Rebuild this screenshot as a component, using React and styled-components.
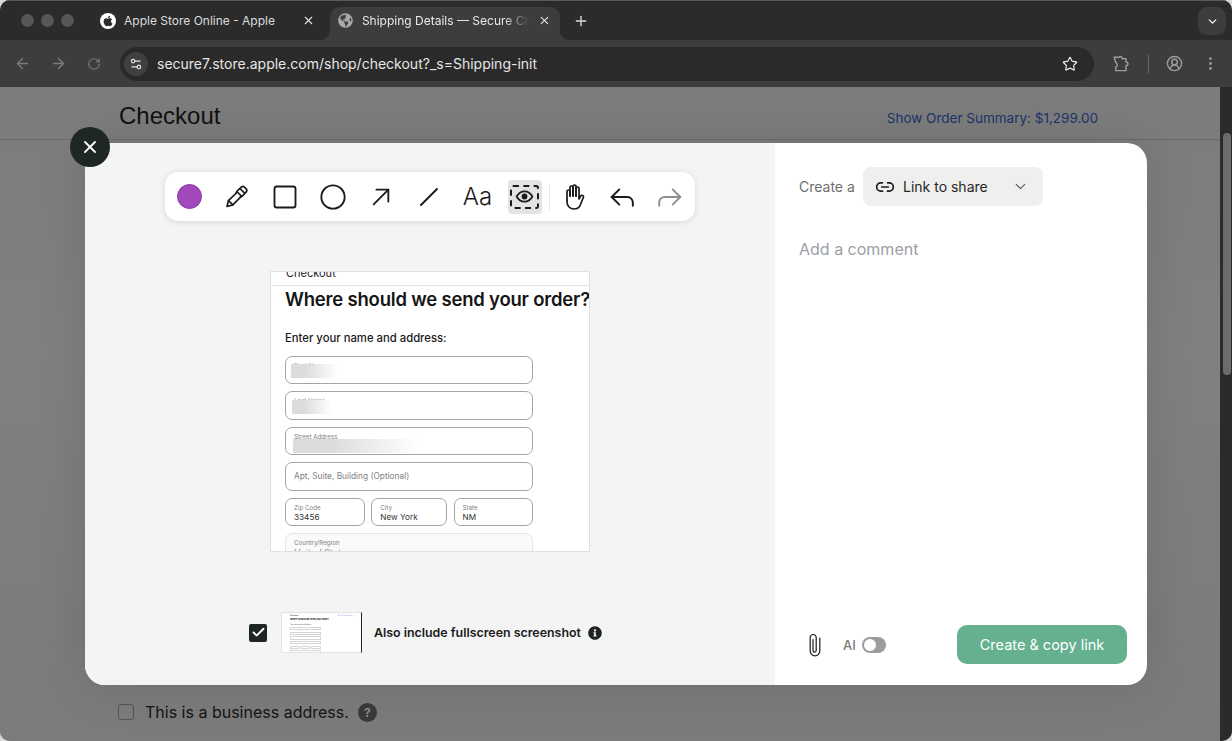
import React from 'react'
import styled, { createGlobalStyle } from 'styled-components'
import {
  X, Plus, ChevronDown, ArrowLeft, ArrowRight, RotateCw, Settings2, Star,
  CircleUserRound, EllipsisVertical, Square, Circle, Link2, Check,
} from 'lucide-react'
import { FaApple, FaGlobeAmericas, FaInfoCircle } from 'react-icons/fa'

const GlobalStyle = createGlobalStyle`
  html, body {
    margin: 0;
    padding: 0;
    background: #d8d8d8;
    overflow: hidden;
  }
  * { box-sizing: border-box; }
`

function Glyph({ size = 24, height, box = '0 0 24 24', width = 1.9, children }) {
  return (
    <svg width={size} height={height || size} viewBox={box} fill="none" stroke="currentColor" strokeWidth={width} strokeLinecap="round" strokeLinejoin="round">
      {children}
    </svg>
  )
}

const PenIcon = () => (
  <Glyph size={25} width={1.6}>
    <path d="M2.800 21.500l1.500-5.500 8.500-8.300 4 4-8.300 8.400z" />
    <path d="M4.300 16l4.200 4.100" />
    <path d="M11.500 9l1.200-2.500 2.600-2.200 4.700 4.700-2.200 2.600-2.300 1.100" />
    <path d="M16 3.600l1.200-1c.7-.5 1.500-.4 2.100.2l2.200 2.200c.6.6.7 1.400.2 2.100l-1.200 1.400" />
  </Glyph>
)

const ArrowIcon = () => (
  <Glyph size={22} width={2}>
    <path d="M4 20L20 4" />
    <path d="M7 4h13v13" />
  </Glyph>
)

const LineIcon = () => (
  <Glyph>
    <path d="M4 20L20 4" />
  </Glyph>
)

const EyeIcon = () => (
  <Glyph size={19} width={2.2}>
    <path d="M2 12s3.600-6.500 10-6.500S22 12 22 12s-3.600 6.500-10 6.500S2 12 2 12z" />
    <circle cx="12" cy="12" r="2.600" fill="currentColor" />
  </Glyph>
)

const HandIcon = () => (
  <Glyph size={24} height={28} box="0 0 24 28" width={1.7}>
    <path d="M5 17V8.500a1.500 1.500 0 0 1 3 0V13" />
    <path d="M8 13V4.500a1.500 1.500 0 0 1 3 0V13" />
    <path d="M11 13V3.500a1.500 1.500 0 0 1 3 0V13" />
    <path d="M14 13V5.500a1.500 1.500 0 0 1 3 0V16l1.700-3a1.500 1.500 0 0 1 2.600 1.500L18.300 22c-1 2.500-3.300 4-6.300 4-4 0-7-3-7-7v-2" />
  </Glyph>
)

const UndoIcon = () => (
  <Glyph size={26} width={1.8}>
    <path d="M9.500 5L2.500 12l7 7" />
    <path d="M2.500 12H17a5 5 0 0 1 5 5v3" />
  </Glyph>
)

const RedoIcon = () => (
  <Glyph size={26} width={1.8}>
    <path d="M14.500 5l7 7-7 7" />
    <path d="M21.500 12H7a5 5 0 0 0-5 5v3" />
  </Glyph>
)

const ClipIcon = () => (
  <Glyph size={12} height={24} box="0 0 12 24" width={1.2}>
    <path d="M10.800 5v13a4.800 4.800 0 0 1-9.600 0V4.500a3 3 0 0 1 6 0v13a1.600 1.600 0 0 1-3.200 0v-11" />
  </Glyph>
)

const ExtensionIcon = () => (
  <Glyph size={19} width={1.8}>
    <path d="M4 4h6.500a2 2 0 0 1 3.500 1.500V6h5v4.500h.5a2 2 0 0 1 0 4H19V21H6v-4.500a3 3 0 0 0 0-5.500z" />
  </Glyph>
)

function Field({ label, value, muted }) {
  return (
    <FieldBox $muted={muted}>
      <FieldLabel>{label}</FieldLabel>
      {value && <FieldValue $muted={muted}>{value}</FieldValue>}
    </FieldBox>
  )
}

export default function App() {
  return (
    <Win>
      <GlobalStyle />
      <TabBar>
        <Lights>
          <Light />
          <Light />
          <Light />
        </Lights>
        <Tab>
          <Favicon><FaApple size={12} color="#2b2b2b" /></Favicon>
          <TabTitle>Apple Store Online - Apple</TabTitle>
          <X size={13} color="#e4e4e4" />
        </Tab>
        <ActiveTab>
          <FaGlobeAmericas size={15} color="#a9a9a9" />
          <ActiveTitle>Shipping Details — Secure Checkout</ActiveTitle>
          <X size={13} color="#e8e8e8" />
        </ActiveTab>
        <NewTab><Plus size={16} color="#dcdcdc" /></NewTab>
        <TabSearch><ChevronDown size={13} color="#eee" strokeWidth={2.5} /></TabSearch>
      </TabBar>

      <NavBar>
        <NavButton><ArrowLeft size={17} color="#7b7b7b" /></NavButton>
        <NavButton><ArrowRight size={17} color="#7b7b7b" /></NavButton>
        <NavButton><RotateCw size={14} color="#7b7b7b" /></NavButton>
        <AddressBar>
          <SiteChip><Settings2 size={14} color="#e4e4e4" /></SiteChip>
          <Url>secure7.store.apple.com/shop/checkout?_s=Shipping-init</Url>
          <Star size={16} color="#eaeaea" strokeWidth={1.8} />
        </AddressBar>
        <NavTools>
          <ExtensionIcon />
          <NavDivider />
          <CircleUserRound size={17} color="#9c9c9c" />
          <EllipsisVertical size={17} color="#9c9c9c" />
        </NavTools>
      </NavBar>

      <Viewport>
        <Page>
          <PageHeader>
            <PageTitle>Checkout</PageTitle>
            <SummaryLink>Show Order Summary: $1,299.00</SummaryLink>
          </PageHeader>
          <BusinessRow>
            <PageCheck />
            <span>This is a business address.</span>
            <HelpBadge>?</HelpBadge>
          </BusinessRow>
        </Page>
        <ScrollTrack>
          <ScrollThumb />
        </ScrollTrack>
      </Viewport>

      <Modal>
        <CloseButton><X size={20} color="#fff" strokeWidth={2.2} /></CloseButton>
        <EditorPane>
          <ToolBar>
            <Swatch />
            <Tool><PenIcon /></Tool>
            <Tool><Square size={28} strokeWidth={1.6} /></Tool>
            <Tool><Circle size={28} strokeWidth={1.6} /></Tool>
            <Tool><ArrowIcon /></Tool>
            <Tool><LineIcon /></Tool>
            <TextTool>Aa</TextTool>
            <ActiveTool>
              <DashedBox><EyeIcon /></DashedBox>
            </ActiveTool>
            <ToolDivider />
            <Tool><HandIcon /></Tool>
            <Tool><UndoIcon /></Tool>
            <Tool $muted><RedoIcon /></Tool>
          </ToolBar>

          <Shot>
            <ShotHeader>Checkout</ShotHeader>
            <ShotBody>
              <ShotTitle>Where should we send your order?</ShotTitle>
              <ShotSub>Enter your name and address:</ShotSub>
              <FieldStack>
                <FieldBox>
                  <FieldLabel $faint>First Name</FieldLabel>
                  <Redact $w={47} $top={7} $left={5} />
                </FieldBox>
                <FieldBox>
                  <FieldLabel $faint>Last Name</FieldLabel>
                  <Redact $w={40} $top={8} $left={6} />
                </FieldBox>
                <FieldBox>
                  <FieldLabel>Street Address</FieldLabel>
                  <Redact $w={126} $top={11} $left={7} />
                </FieldBox>
                <FieldBox $center><Placeholder>Apt, Suite, Building (Optional)</Placeholder></FieldBox>
                <FieldRow>
                  <Field label="Zip Code" value="33456" />
                  <Field label="City" value="New York" />
                  <Field label="State" value="NM" />
                </FieldRow>
                <Field label="Country/Region" value="United States" muted />
              </FieldStack>
            </ShotBody>
          </Shot>

          <IncludeRow>
            <CheckBox><Check size={15} color="#fff" strokeWidth={3} /></CheckBox>
            <Thumb>
              <ThumbTop>
                <span>Checkout</span>
                <ThumbLink>Show Order Summary</ThumbLink>
              </ThumbTop>
              <ThumbTitle>Where should we send your order?</ThumbTitle>
              <ThumbText>Enter your name and address:</ThumbText>
              <ThumbFields>
                <ThumbField />
                <ThumbField />
                <ThumbField />
                <ThumbField />
                <ThumbFieldRow>
                  <ThumbField />
                  <ThumbField />
                  <ThumbField />
                </ThumbFieldRow>
                <ThumbField />
              </ThumbFields>
            </Thumb>
            <IncludeLabel>Also include fullscreen screenshot</IncludeLabel>
            <FaInfoCircle size={14} color="#1f2525" />
          </IncludeRow>
        </EditorPane>

        <SidePane>
          <CreateRow>
            <CreateLabel>Create a</CreateLabel>
            <TypeSelect>
              <Link2 size={20} color="#1c1c1c" strokeWidth={2} />
              <TypeName>Link to share</TypeName>
              <ChevronDown size={17} color="#555" strokeWidth={1.6} />
            </TypeSelect>
          </CreateRow>
          <Comment>Add a comment</Comment>
          <SideFooter>
            <ClipButton><ClipIcon /></ClipButton>
            <AiLabel>AI</AiLabel>
            <AiToggle><AiKnob /></AiToggle>
            <CreateButton>Create &amp; copy link</CreateButton>
          </SideFooter>
        </SidePane>
      </Modal>
    </Win>
  )
}

const Win = styled.div`
  position: relative;
  width: 1232px;
  height: 741px;
  border-radius: 10px;
  overflow: hidden;
  display: flex;
  flex-direction: column;
  background: #7f7f7f;
  font-family: Inter, "Liberation Sans", sans-serif;
`

const TabBar = styled.div`
  height: 40px;
  flex-shrink: 0;
  display: flex;
  align-items: flex-end;
  background: #2b2b2b;
  border-top: 1px solid #5a5a5a;
`

const Lights = styled.div`
  width: 92px;
  padding-left: 21px;
  align-self: center;
  display: flex;
  gap: 7px;
`

const Light = styled.div`
  width: 13px;
  height: 13px;
  border-radius: 50%;
  background: #565656;
`

const Tab = styled.div`
  width: 230px;
  height: 33px;
  padding: 0 7px 6px 8px;
  display: flex;
  align-items: center;
`

const Favicon = styled.div`
  width: 16px;
  height: 16px;
  border-radius: 50%;
  background: #fff;
  display: flex;
  align-items: center;
  justify-content: center;
  flex-shrink: 0;
`

const TabTitle = styled.div`
  flex: 1;
  margin-left: 8px;
  font-size: 12px;
  color: #dcdcdc;
  white-space: nowrap;
`

const ActiveTab = styled.div`
  position: relative;
  width: 230px;
  height: 33px;
  margin-left: 8px;
  padding: 0 9px 6px 8px;
  display: flex;
  align-items: center;
  background: #3d3d3d;
  border-radius: 10px 10px 0 0;

  &::before,
  &::after {
    content: '';
    position: absolute;
    bottom: 0;
    width: 10px;
    height: 10px;
  }
  &::before {
    left: -10px;
    background: radial-gradient(circle at 0 0, #2b2b2b 10px, #3d3d3d 10.5px);
  }
  &::after {
    right: -10px;
    background: radial-gradient(circle at 100% 0, #2b2b2b 10px, #3d3d3d 10.5px);
  }
`

const ActiveTitle = styled.div`
  width: 168px;
  margin: 0 9px 0 9px;
  font-size: 12px;
  color: #e8e8e8;
  white-space: nowrap;
  overflow: hidden;
  mask-image: linear-gradient(90deg, #000 85%, transparent 100%);
`

const NewTab = styled.div`
  width: 24px;
  height: 33px;
  margin-left: 9px;
  padding-bottom: 6px;
  display: flex;
  align-items: center;
  justify-content: center;
`

const TabSearch = styled.div`
  width: 28px;
  height: 28px;
  margin: 0 6px 5px auto;
  border-radius: 9px;
  background: #3d3d3d;
  display: flex;
  align-items: center;
  justify-content: center;
`

const NavBar = styled.div`
  height: 47px;
  flex-shrink: 0;
  padding: 0 8px 0 4px;
  display: flex;
  align-items: center;
  background: #3d3d3d;
`

const NavButton = styled.div`
  width: 36px;
  height: 34px;
  display: flex;
  align-items: center;
  justify-content: center;
`

const AddressBar = styled.div`
  width: 974px;
  height: 34px;
  margin-left: 8px;
  padding: 0 16px 0 4px;
  border-radius: 17px;
  background: #2a2a2a;
  display: flex;
  align-items: center;
`

const SiteChip = styled.div`
  width: 24px;
  height: 24px;
  border-radius: 50%;
  background: #404040;
  display: flex;
  align-items: center;
  justify-content: center;
`

const Url = styled.div`
  flex: 1;
  margin-left: 9px;
  font-size: 14px;
  color: #e6e6e6;
`

const NavTools = styled.div`
  flex: 1;
  padding-left: 17px;
  display: flex;
  align-items: center;
  color: #9c9c9c;
`

const NavDivider = styled.div`
  width: 1px;
  height: 18px;
  margin: 0 17px 0 18px;
  background: #6a6a6a;
  & + svg { margin-right: 19px; }
`

const Viewport = styled.div`
  flex: 1;
  display: flex;
  min-height: 0;
`

const Page = styled.div`
  flex: 1;
  display: flex;
  flex-direction: column;
  background: linear-gradient(180deg, #7c7c7c 0, #808080 40%, #7b7b7b 100%);
`

const PageHeader = styled.div`
  height: 53px;
  padding: 15px 122px 0 119px;
  display: flex;
  justify-content: space-between;
  border-bottom: 1px solid #6b6b6b;
`

const PageTitle = styled.div`
  font-family: "Liberation Sans", sans-serif;
  font-size: 24px;
  line-height: 28px;
  color: #111;
`

const SummaryLink = styled.div`
  margin-top: 8px;
  font-size: 13.500px;
  line-height: 17px;
  color: #1d3469;
`

const BusinessRow = styled.div`
  margin-top: auto;
  height: 30px;
  margin-bottom: 14px;
  padding-left: 118px;
  display: flex;
  align-items: center;
  font-size: 16px;
  color: #141414;
`

const PageCheck = styled.div`
  width: 16px;
  height: 16px;
  margin-right: 11px;
  border: 1.5px solid #555;
  border-radius: 3px;
`

const HelpBadge = styled.div`
  width: 19px;
  height: 19px;
  margin-left: 9px;
  border-radius: 50%;
  background: #3a3a3a;
  color: #8c8c8c;
  font-size: 12px;
  font-weight: 700;
  display: flex;
  align-items: center;
  justify-content: center;
`

const ScrollTrack = styled.div`
  width: 12px;
  padding: 46px 1px 0 3px;
  background: #2b2b2b;
`

const ScrollThumb = styled.div`
  height: 242px;
  border-radius: 4px;
  background: #6c6c6c;
`

const Modal = styled.div`
  position: absolute;
  top: 143px;
  left: 85px;
  width: 1062px;
  height: 542px;
  display: flex;
  border-radius: 20px;
  background: #fff;
  box-shadow: 0 0 50px rgba(0, 0, 0, 0.12);
`

const CloseButton = styled.div`
  position: absolute;
  top: -16px;
  left: -15px;
  z-index: 2;
  width: 40px;
  height: 40px;
  border-radius: 50%;
  background: #1e2626;
  display: flex;
  align-items: center;
  justify-content: center;
`

const EditorPane = styled.div`
  width: 690px;
  flex-shrink: 0;
  display: flex;
  flex-direction: column;
  align-items: center;
  background: #f4f4f4;
  border-radius: 20px 0 0 20px;
`

const ToolBar = styled.div`
  width: 530px;
  height: 49px;
  margin-top: 29px;
  padding: 0 8px 0 12px;
  display: flex;
  align-items: center;
  gap: 14px;
  background: #fff;
  border-radius: 13px;
  box-shadow: 0 1px 6px rgba(0, 0, 0, 0.12);
`

const Swatch = styled.div`
  width: 25px;
  height: 25px;
  margin-right: 3.500px;
  border-radius: 50%;
  background: #a347bd;
  border: 1px solid #8e38a6;
  flex-shrink: 0;
`

const Tool = styled.div`
  width: 34px;
  height: 34px;
  display: flex;
  align-items: center;
  justify-content: center;
  flex-shrink: 0;
  color: ${p => (p.$muted ? '#8f8f8f' : '#1b1b1b')};
`

const TextTool = styled(Tool)`
  padding-left: 2px;
  font-size: 24px;
  font-weight: 300;
  color: #1b1b1b;
`

const ActiveTool = styled(Tool)`
  border-radius: 4px;
  background: #e3e3e3;
`

const DashedBox = styled.div`
  width: 29px;
  height: 24px;
  flex-shrink: 0;
  border: 2px dashed #1b1b1b;
  border-radius: 3px;
  display: flex;
  align-items: center;
  justify-content: center;
`

const ToolDivider = styled.div`
  width: 1px;
  height: 26px;
  margin: 0 -7px;
  background: #e6e6e6;
  flex-shrink: 0;
`

const Shot = styled.div`
  width: 320px;
  height: 281px;
  margin-top: 50px;
  flex-shrink: 0;
  overflow: hidden;
  background: #fff;
  border: 1px solid #e0e0e0;
`

const ShotHeader = styled.div`
  height: 14px;
  padding-left: 15px;
  font-size: 11px;
  line-height: 3px;
  color: #222;
  border-bottom: 1px solid #e2e2e2;
`

const ShotBody = styled.div`
  padding: 0 0 0 14px;
`

const ShotTitle = styled.div`
  margin-top: 1px;
  font-size: 18.500px;
  line-height: 24px;
  font-weight: 600;
  letter-spacing: -0.2px;
  color: #151515;
  white-space: nowrap;
`

const ShotSub = styled.div`
  margin-top: 19px;
  font-size: 11.300px;
  line-height: 16px;
  font-weight: 500;
  color: #1a1a1a;
`

const FieldStack = styled.div`
  width: 248px;
  margin-top: 10px;
  display: flex;
  flex-direction: column;
  gap: 7px;
`

const FieldRow = styled.div`
  display: grid;
  grid-template-columns: 80px 76px 1fr;
  column-gap: 6.300px;
`

const FieldBox = styled.div`
  position: relative;
  height: 28.400px;
  padding: 0 8px;
  flex-shrink: 0;
  overflow: hidden;
  border: 1px solid ${p => (p.$muted ? '#e6e6e6' : '#a5a5a5')};
  border-radius: 7px;
  display: flex;
  flex-direction: column;
  justify-content: ${p => (p.$center ? 'center' : 'flex-start')};
  background: ${p => (p.$muted ? '#fafafa' : '#fff')};
`

const FieldLabel = styled.div`
  margin-top: 4px;
  font-size: 6.200px;
  line-height: 9px;
  white-space: nowrap;
  color: ${p => (p.$faint ? '#aaa' : '#808080')};
`

const FieldValue = styled.div`
  font-size: ${p => (p.$muted ? '9px' : '8.200px')};
  line-height: 11px;
  color: ${p => (p.$muted ? '#8a8a8a' : '#333')};
  white-space: nowrap;
`

const Placeholder = styled.div`
  font-size: 8.300px;
  color: #7f7f7f;
  white-space: nowrap;
`

const Redact = styled.div`
  position: absolute;
  top: ${p => p.$top}px;
  left: ${p => p.$left}px;
  width: ${p => p.$w}px;
  height: 14px;
  background: linear-gradient(90deg, #dcdcdc 30%, #fff 100%);
`

const IncludeRow = styled.div`
  align-self: flex-start;
  margin-top: 60px;
  margin-left: 164px;
  display: flex;
  align-items: center;
`

const CheckBox = styled.div`
  width: 18px;
  height: 18px;
  margin-right: 14px;
  border-radius: 2px;
  background: #1f2525;
  display: flex;
  align-items: center;
  justify-content: center;
`

const Thumb = styled.div`
  width: 81px;
  height: 41px;
  padding: 1px 8px 0 8px;
  overflow: hidden;
  background: #fff;
  border: 1px solid #e3e3e3;
  border-right: 1px solid #222;
`

const ThumbTop = styled.div`
  display: flex;
  justify-content: space-between;
  font-size: 1.800px;
  line-height: 3px;
  color: #222;
`

const ThumbLink = styled.span`
  font-size: 1.500px;
  color: #7a9ad8;
`

const ThumbTitle = styled.div`
  margin-top: 1px;
  font-size: 2.300px;
  line-height: 4px;
  font-weight: 700;
  color: #111;
  white-space: nowrap;
`

const ThumbText = styled.div`
  margin-top: 1px;
  font-size: 1.500px;
  line-height: 3px;
  color: #333;
`

const ThumbFields = styled.div`
  width: 31px;
  margin-top: 1px;
  display: flex;
  flex-direction: column;
  gap: 1.400px;
`

const ThumbField = styled.div`
  flex: 1;
  min-height: 3.300px;
  border: 0.5px solid #d5d5d5;
  border-radius: 0.5px;
`

const ThumbFieldRow = styled.div`
  display: flex;
  gap: 1px;
`

const IncludeLabel = styled.div`
  margin: 0 7px 0 12px;
  font-size: 12.400px;
  font-weight: 600;
  color: #1b1b1b;
  white-space: nowrap;
`

const SidePane = styled.div`
  flex: 1;
  padding: 24px 20px 21px 24px;
  display: flex;
  flex-direction: column;
`

const CreateRow = styled.div`
  display: flex;
  align-items: center;
`

const CreateLabel = styled.div`
  width: 64px;
  font-size: 14px;
  color: #6e6e6e;
  white-space: nowrap;
`

const TypeSelect = styled.div`
  width: 180px;
  height: 39px;
  padding: 0 14px 0 12px;
  border-radius: 8px;
  background: #efefef;
  display: flex;
  align-items: center;
`

const TypeName = styled.div`
  flex: 1;
  margin-left: 8px;
  font-size: 14px;
  color: #262626;
`

const Comment = styled.div`
  margin-top: 33px;
  font-size: 16px;
  line-height: 20px;
  color: #9aa0a6;
`

const SideFooter = styled.div`
  margin-top: auto;
  display: flex;
  align-items: center;
`

const ClipButton = styled.div`
  width: 12px;
  height: 24px;
  margin: 0 22px 0 10px;
  color: #1b1b1b;
`

const AiLabel = styled.div`
  font-size: 13px;
  font-weight: 500;
  color: #7a7a7a;
`

const AiToggle = styled.div`
  width: 24px;
  height: 16px;
  margin-left: 6px;
  padding: 2px;
  border-radius: 8px;
  background: #9c9c9c;
`

const AiKnob = styled.div`
  width: 12px;
  height: 12px;
  border-radius: 50%;
  background: #fff;
`

const CreateButton = styled.div`
  width: 170px;
  height: 39px;
  margin-left: auto;
  border-radius: 10px;
  background: #65b08f;
  color: #fff;
  font-size: 14.500px;
  display: flex;
  align-items: center;
  justify-content: center;
`
